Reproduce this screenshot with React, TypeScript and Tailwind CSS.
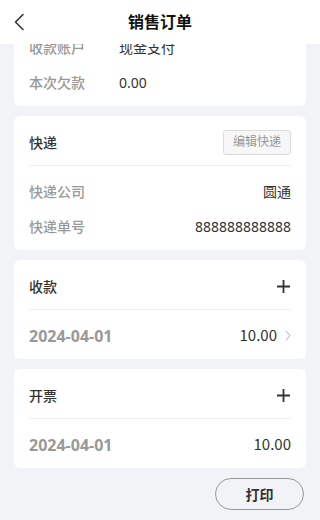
import React from "react";

const font = {
  fontFamily: '"Noto Sans", "Noto Sans CJK SC", sans-serif',
};

function BackIcon() {
  return (
    <svg width="12" height="18" viewBox="0 0 12 18" fill="none">
      <path d="M10 1.5 2.5 9l7.5 7.5" stroke="#333" strokeWidth="1.6" strokeLinecap="round" strokeLinejoin="round" />
    </svg>
  );
}

function PlusIcon() {
  return (
    <svg width="15" height="15" viewBox="0 0 15 15" fill="none">
      <path d="M1 7.5h13M7.5 1v13" stroke="#333" strokeWidth="1.8" />
    </svg>
  );
}

function ArrowIcon() {
  return (
    <svg width="6" height="11" viewBox="0 0 6 11" fill="none">
      <path d="M1 1l4 4.5L1 10" stroke="#bbb" strokeWidth="1.1" strokeLinecap="round" strokeLinejoin="round" />
    </svg>
  );
}

function Card({ children, className = "" }: { children: React.ReactNode; className?: string }) {
  return <div className={`rounded-md bg-white px-[15px] ${className}`}>{children}</div>;
}

function CardHead({ title, right }: { title: string; right?: React.ReactNode }) {
  return (
    <div className="mt-[3px] flex h-[47px] items-center justify-between border-b border-[#eeeeee]">
      <span className="text-[14px] font-medium text-[#333]">{title}</span>
      {right}
    </div>
  );
}

function InfoRow({ label, value, spread }: { label: string; value: string; spread?: boolean }) {
  return (
    <div className={`flex h-[35px] items-center text-[14px] ${spread ? "justify-between" : ""}`}>
      <span className={`font-medium text-[#999] ${spread ? "" : "w-[90px]"}`}>{label}</span>
      <span className="text-[#333]">{value}</span>
    </div>
  );
}

function RecordRow({ date, amount, link }: { date: string; amount: string; link?: boolean }) {
  return (
    <div className="mt-[8px] flex h-[35px] items-center justify-between">
      <span className="text-[16px] font-bold text-[#999]">{date}</span>
      <span className="flex items-center gap-[8px] font-['Noto_Sans_CJK_SC',sans-serif] text-[15px] text-[#333]">
        {amount}
        {link && <ArrowIcon />}
      </span>
    </div>
  );
}

export default function App() {
  return (
    <div className="flex h-[520px] w-[320px] flex-col bg-[#f2f3f7]" style={font}>
      <header className="grid h-[44px] shrink-0 grid-cols-[44px_1fr_44px] items-center bg-white">
        <button className="flex h-full items-center pl-[13px]">
          <BackIcon />
        </button>
        <h1 className="text-center text-[16px] font-bold text-[#111]">销售订单</h1>
        <span />
      </header>

      <main className="flex-1 overflow-hidden px-[14px]">
        <div className="-mt-[22px] flex flex-col gap-[10px]">
          <Card className="pb-[6px] pt-[8px]">
            <InfoRow label="收款账户" value="现金支付" />
            <InfoRow label="本次欠款" value="0.00" />
          </Card>

          <Card className="pb-[6px]">
            <CardHead
              title="快递"
              right={
                <button className="h-[25px] w-[68px] rounded-[3px] border border-[#dcdcdc] bg-[#f7f7f7] text-[12px] text-[#999]">
                  编辑快递
                </button>
              }
            />
            <div className="pt-[8px]">
              <InfoRow label="快递公司" value="圆通" spread />
              <InfoRow label="快递单号" value="888888888888" spread />
            </div>
          </Card>

          <Card className="pb-[6px]">
            <CardHead title="收款" right={<PlusIcon />} />
            <RecordRow date="2024-04-01" amount="10.00" link />
          </Card>

          <Card className="pb-[6px]">
            <CardHead title="开票" right={<PlusIcon />} />
            <RecordRow date="2024-04-01" amount="10.00" />
          </Card>
        </div>
      </main>

      <footer className="flex h-[52px] shrink-0 items-center justify-end pr-[16px]">
        <button className="h-[32px] w-[89px] rounded-full border border-[#999] text-[14px] font-bold text-[#333]">
          打印
        </button>
      </footer>
    </div>
  );
}
